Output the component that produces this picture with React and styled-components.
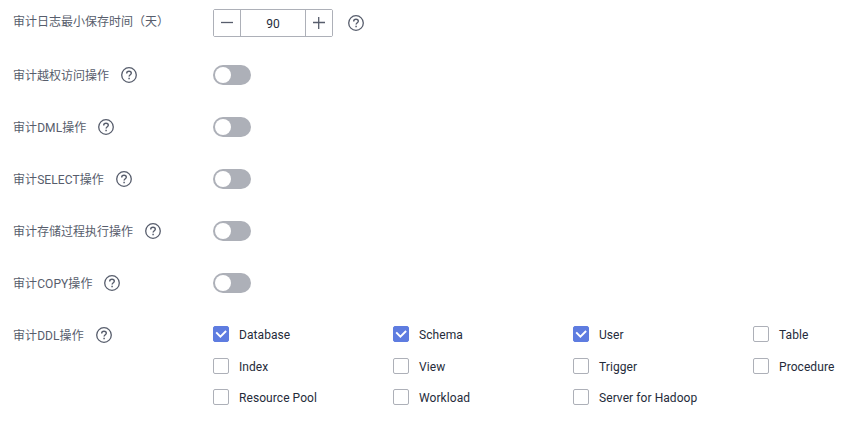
import React, { useState } from "react";
import styled, { createGlobalStyle } from "styled-components";

const GlobalStyle = createGlobalStyle`
  * { box-sizing: border-box; }
  body {
    margin: 0;
    background: #fff;
    color: #252b3a;
    font: 12px/16px Roboto, "Noto Sans CJK SC", sans-serif;
  }
`;

const Form = styled.main`
  display: flex;
  flex-direction: column;
  gap: 24px;
  width: 847px;
  height: 427px;
  padding: 9px 0 0 13px;
  overflow: hidden;
`;

const Row = styled.div`
  display: grid;
  grid-template-columns: 200px 1fr;
  align-items: start;
  min-height: 28px;
`;

const LabelCell = styled.div`
  display: flex;
  align-items: center;
  gap: 12px;
  height: 28px;
`;

const Label = styled.span`
  color: #575d6c;
  white-space: nowrap;
  letter-spacing: ${(p) => (p.$latin ? "0.08px" : "normal")};
  padding: ${(p) => (p.$raised ? "0 0 2px" : "2px 0 0")};
`;

const Control = styled.div`
  display: flex;
  align-items: center;
  gap: 15px;
  height: 28px;
`;

const Stepper = styled.div`
  display: grid;
  grid-template-columns: 27px 64px 27px;
  width: 120px;
  height: 28px;
  border: 1px solid #adb0b8;
  border-radius: 2px;
`;

const StepButton = styled.button`
  display: grid;
  place-items: center;
  padding: 0;
  border: 0 solid #adb0b8;
  border-width: ${(p) => (p.$side === "left" ? "0 1px 0 0" : "0 0 0 1px")};
  background: #fff;
  color: #575d6c;
`;

const StepValue = styled.span`
  display: grid;
  place-items: center;
  padding-top: 2px;
`;

const Switch = styled.button`
  display: flex;
  align-items: center;
  justify-content: ${(p) => (p.$on ? "flex-end" : "flex-start")};
  width: 38px;
  height: 20px;
  padding: 2px;
  border: 0;
  border-radius: 10px;
  background: ${(p) => (p.$on ? "#5e7ce0" : "#adb0b8")};
`;

const Knob = styled.span`
  width: 16px;
  height: 16px;
  border-radius: 50%;
  background: #fff;
`;

const Options = styled.div`
  display: grid;
  grid-template-columns: repeat(4, 180px);
  grid-template-rows: 32px 31px 16px;
  padding-top: 5px;
`;

const Option = styled.label`
  display: flex;
  gap: 10px;
  height: 16px;
  white-space: nowrap;
`;

const Box = styled.span`
  display: grid;
  place-items: center;
  width: 16px;
  height: 16px;
  border: 1px solid ${(p) => (p.$on ? "#5e7ce0" : "#adb0b8")};
  border-radius: 2px;
  background: ${(p) => (p.$on ? "#5e7ce0" : "#fff")};
`;

const OptionText = styled.span`
  padding-top: 1px;
  letter-spacing: 0.07px;
`;

const Icon = styled.svg`
  display: block;
  flex: none;
  fill: none;
  stroke: currentColor;
`;

const HelpSvg = styled(Icon)`
  color: #575d6c;
`;

const Help = () => (
  <HelpSvg width="16" height="16" viewBox="0 0 16 16">
    <circle cx="8" cy="8" r="7.3" strokeWidth="1.3" />
    <path d="M5.7 6.4C5.7 5 6.7 4.3 8 4.3s2.3.7 2.3 1.9c0 1.6-2.2 1.6-2.2 3.4" strokeWidth="1.4" />
    <path d="M8.1 10.7v1.5" strokeWidth="1.5" />
  </HelpSvg>
);

const switches = ["审计越权访问操作", "审计DML操作", "审计SELECT操作", "审计存储过程执行操作", "审计COPY操作"];
const options = [
  "Database", "Schema", "User", "Table",
  "Index", "View", "Trigger", "Procedure",
  "Resource Pool", "Workload", "Server for Hadoop",
];

function ToggleRow({ label }) {
  const [on, setOn] = useState(false);
  return (
    <Row>
      <LabelCell><Label $latin={/[A-Z]/.test(label)}>{label}</Label><Help /></LabelCell>
      <Control>
        <Switch type="button" role="switch" aria-checked={on} $on={on} onClick={() => setOn(!on)}>
          <Knob />
        </Switch>
      </Control>
    </Row>
  );
}

export default function App() {
  const [days, setDays] = useState(90);
  const [checked, setChecked] = useState(["Database", "Schema", "User"]);
  const toggle = (name) =>
    setChecked((list) => (list.includes(name) ? list.filter((n) => n !== name) : [...list, name]));

  return (
    <>
      <GlobalStyle />
      <Form>
        <Row>
          <LabelCell><Label $raised>审计日志最小保存时间（天）</Label></LabelCell>
          <Control>
            <Stepper>
              <StepButton type="button" $side="left" onClick={() => setDays(days - 1)}>
                <Icon width="12" height="12" viewBox="0 0 12 12"><path d="M0 5.5h12" strokeWidth="1.3" /></Icon>
              </StepButton>
              <StepValue>{days}</StepValue>
              <StepButton type="button" $side="right" onClick={() => setDays(days + 1)}>
                <Icon width="12" height="12" viewBox="0 0 12 12"><path d="M0 5.5h12M5.7 0v12" strokeWidth="1.3" /></Icon>
              </StepButton>
            </Stepper>
            <Help />
          </Control>
        </Row>
        {switches.map((label) => <ToggleRow key={label} label={label} />)}
        <Row>
          <LabelCell><Label $latin>审计DDL操作</Label><Help /></LabelCell>
          <Options>
            {options.map((name) => {
              const on = checked.includes(name);
              return (
                <Option key={name} onClick={() => toggle(name)}>
                  <Box $on={on}>
                    {on && (
                      <Icon width="14" height="14" viewBox="0 0 14 14">
                        <path d="M2.2 5.4l4.2 4.3 5.7-5.7" stroke="#fff" strokeWidth="1.9" />
                      </Icon>
                    )}
                  </Box>
                  <OptionText>{name}</OptionText>
                </Option>
              );
            })}
          </Options>
        </Row>
      </Form>
    </>
  );
}
